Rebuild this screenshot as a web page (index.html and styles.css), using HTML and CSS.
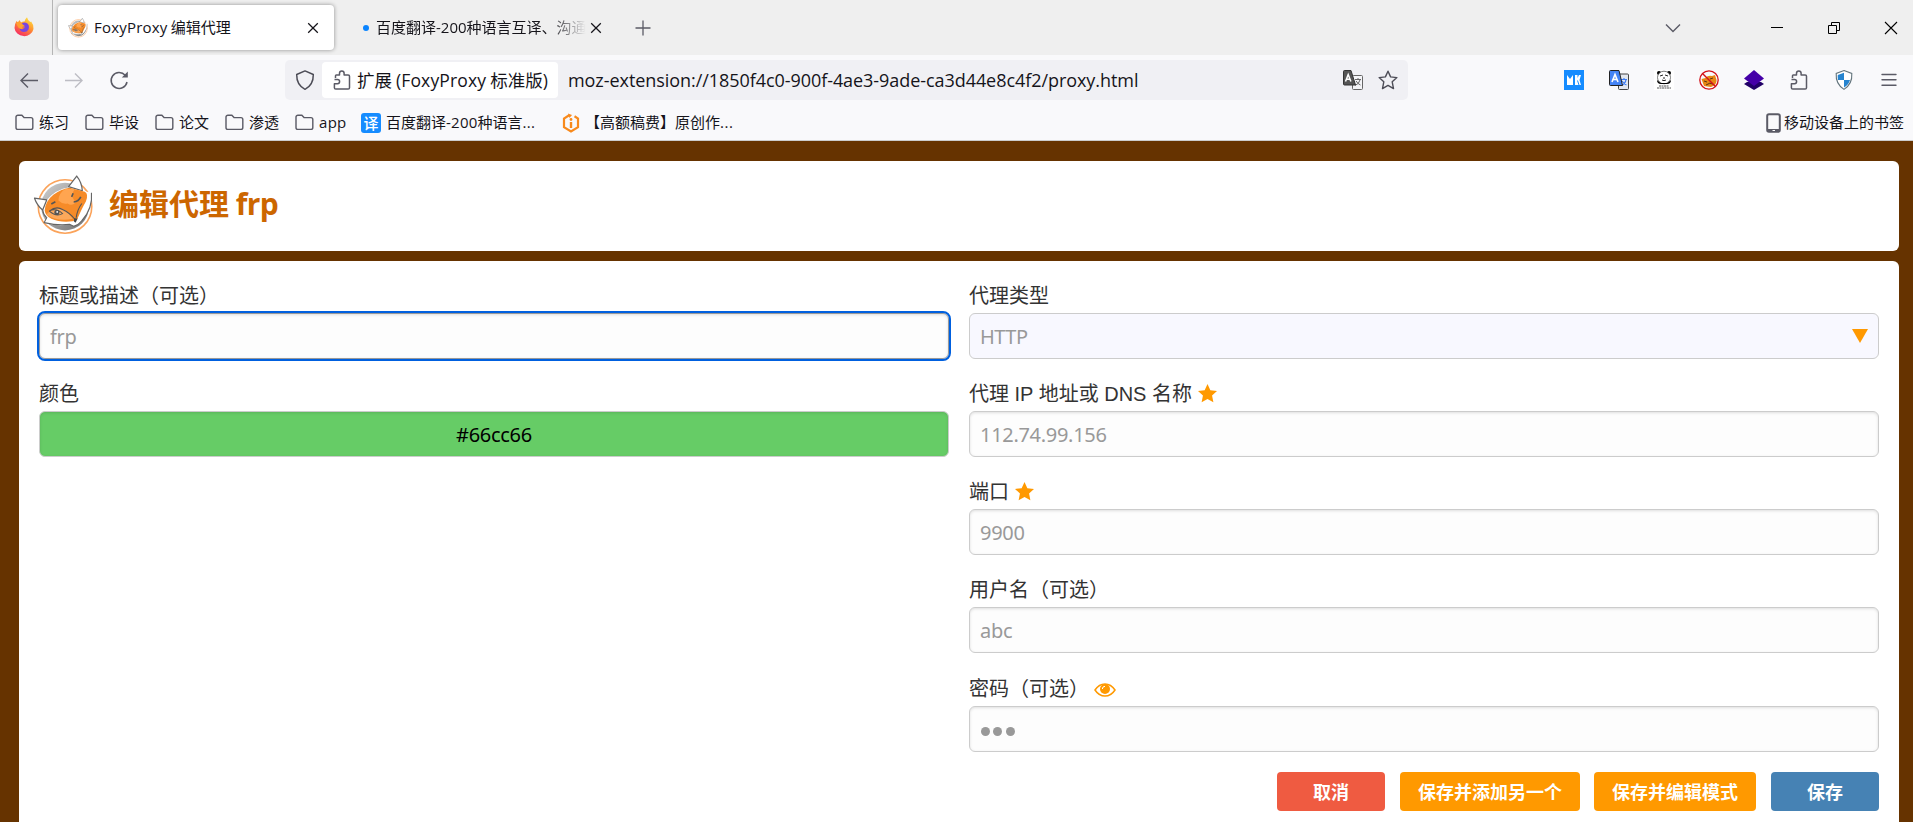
FILE: index.html
```html
<!DOCTYPE html>
<html lang="zh-CN">
<head>
<meta charset="utf-8">
<title>FoxyProxy 编辑代理</title>
<link rel="stylesheet" href="styles.css">
</head>
<body>
<svg width="0" height="0" class="defs">
  <defs>
    <linearGradient id="flame" x1="0.8" y1="0" x2="0.2" y2="1"><stop offset="0" stop-color="#ffe840"/><stop offset=".45" stop-color="#ff9030"/><stop offset="1" stop-color="#f5206a"/></linearGradient>
    <linearGradient id="disc" x1="0" y1="0" x2="1" y2="1"><stop offset="0" stop-color="#d0d0d0"/><stop offset="1" stop-color="#707070"/></linearGradient>
    <symbol id="fox" viewBox="0 0 60 60">
      <circle cx="31.500" cy="31" r="26.300" fill="#fff" stroke="#fba35a" stroke-width="1.600"/>
      <circle cx="31.500" cy="31" r="23.500" fill="url(#disc)"/>
      <path d="M13 25Q22 14 36 12L49 15.500 57.500 17.500Q60 31 48 45Q45 49 40 50.500L36 48.500Q25 51 11 47L13.500 42Q10 39 10 34Z" fill="#fff"/>
      <path d="M1.500 22.800L13.500 24.500 9.500 34.500Q4 30 1.500 22.800zM35 11.500L43 1Q48 7 48.500 15.500z" fill="#fff" stroke="#666" stroke-width="1.200" stroke-linejoin="round"/>
      <path d="M9.500 34.500Q10 39 13.500 42L11 46.800Q25 50 36 48.500L40 50.500Q45 49 48 45Q59 33 57.500 17.500" fill="none" stroke="#666" stroke-width="1.100"/>
      <path d="M11.500 35Q12 26 20 19.500Q27 14 36 12.500L51 16.500Q55 19 52 26Q48 33 43.500 43.500L39 45.500Q27 47 18 43Q12 40 11.500 35Z" fill="#f68b28"/>
      <path d="M25 25Q25 18 32 13.500L41 14Q36 20 42 27Q38 31 34 28Q29 29 25 25Z" fill="#ffa550"/>
      <path d="M13 39Q18 34 23 33Q31 31 39 43Q24 46 13 39Z" fill="#fda95b"/>
      <path d="M16 35.500Q23 30 29 34Q36 37 41.500 44M16 35.500Q23 32 29 38Q23 41.500 16 35.500M42.500 42Q43.500 34 48 28" fill="none" stroke="#555" stroke-width="1.100"/>
      <circle cx="23.500" cy="36.800" r="2.500" fill="#555"/><circle cx="23.800" cy="36.300" r=".9" fill="#fff"/>
      <path d="M40.500 42.500l3.500.3-2.200 4.200-1.700-1.500z" fill="#444"/>
      <path d="M40 26.500Q45 26 47 21.500M38 21.500l1.500-3.500M18 28.500l4-2.200" fill="none" stroke="#555" stroke-width="1.600"/>
    </symbol>
    <symbol id="folder" viewBox="0 0 20 18"><path d="M1 3.300a2 2 0 0 1 2-2h4.200l2.300 2.500h7.300a2 2 0 0 1 2 2v8.500a2 2 0 0 1-2 2H3a2 2 0 0 1-2-2z" fill="none" stroke="#5b5b66" stroke-width="1.500"/></symbol>
    <symbol id="puzzle" viewBox="0 0 20 20"><path d="M3.500 8V5.800Q3.500 5 4.300 5H7.500V3.300a2.300 2.300 0 0 1 4.600 0V5h4.100q1.300 0 1.300 1.300V17.700q0 1.300-1.300 1.300H3.700q-1.300 0-1.300-1.300V13.700H5.500a2 2 0 0 0 0-4.200H2.500" fill="none" stroke="#5b5b66" stroke-width="1.500" stroke-linejoin="round"/></symbol>
    <symbol id="close" viewBox="0 0 12 12"><path d="M1.200 1.200l9.600 9.600M10.800 1.200l-9.600 9.600" fill="none" stroke="#15141a" stroke-width="1.250"/></symbol>
    <symbol id="star" viewBox="0 0 20 20"><path d="M10 0l3 6.500 7 .8-5.200 4.800 1.400 7.100-6.200-3.500-6.200 3.500 1.400-7.100L0 7.300l7-.8z" fill="#f90"/></symbol>
  </defs>
</svg>

<header class="chrome">
  <div class="tabstrip">
    <div class="pinned">
      <svg class="i20" viewBox="0 0 20 20"><path d="M2.500 4l1.500 1.500L5.500 3l1.500 2.500Q9 4 10.500 4.500 11 2 13 .3q.5 2.500 3 4.500 1 .5 1-.5Q20 8 19.500 12A9.600 8.800 0 0 1 .5 11Q.5 7 2.500 4z" fill="url(#flame)"/><path d="M8 6.500Q10 5 12.500 6q3.500 1.500 2 6.500-1.500 2.500-4.500 2.500-4 0-4.500-4 1 1.500 3 1.300L11 10.500 7 9.500Q6.500 7.500 8 6.500z" fill="#7a45e0"/><path d="M2 6q3-2.500 5 .2L9.500 8 11 9.200 8 10l.5 2q-3 .5-4.500-2z" fill="#ffa130"/></svg>
    </div>
    <div class="tab active">
      <svg class="i20"><use href="#fox"/></svg>
      <span class="tabtext"><span class="lat foxy">FoxyProxy</span> 编辑代理</span>
      <svg class="x"><use href="#close"/></svg>
    </div>
    <div class="tab loading">
      <i class="dot"></i>
      <span class="tabtext fade">百度翻译<span class="lat">-200</span>种语言互译、沟通</span>
      <svg class="x"><use href="#close"/></svg>
    </div>
    <svg class="plus" viewBox="0 0 16 16"><path d="M8 .5v15M.5 8h15" stroke="#5b5b66" stroke-width="1.300"/></svg>
    <div class="window">
      <svg class="chev" viewBox="0 0 16 10"><path d="M1 1.500l7 7 7-7" fill="none" stroke="#5b5b66" stroke-width="1.400"/></svg>
      <svg class="wbtn" viewBox="0 0 14 14"><path d="M1 6.500h12" stroke="#000"/></svg>
      <svg class="wbtn" viewBox="0 0 14 14"><path d="M1.500 4.500h8v8h-8zM4.500 4.500v-3h8v8h-3" fill="none" stroke="#000"/></svg>
      <svg class="wbtn" viewBox="0 0 14 14"><path d="M1 1l12 12M13 1L1 13" stroke="#000" stroke-width="1.100"/></svg>
    </div>
  </div>

  <div class="navbar">
    <div class="navbtn on"><svg class="i20" viewBox="0 0 20 20"><path d="M19 10.500H2M9 3.500l-7 7 7 7" fill="none" stroke="#5b5b66" stroke-width="1.400"/></svg></div>
    <div class="navbtn off"><svg class="i20" viewBox="0 0 20 20"><path d="M1 10.500h17M11 3.500l7 7-7 7" fill="none" stroke="#bdbdc4" stroke-width="1.400"/></svg></div>
    <div class="navbtn reload"><svg class="i20" viewBox="0 0 20 20"><path d="M16.200 5.200A8 8 0 1 0 18 12" fill="none" stroke="#5b5b66" stroke-width="1.500"/><path d="M18.800 1.500v6h-6z" fill="#5b5b66"/></svg></div>
    <div class="urlbar">
      <svg class="i20 guard" viewBox="0 0 20 20"><path d="M10 .9L18.300 4.500Q18.500 15 10 19.300 1.500 15 1.700 4.500z" fill="none" stroke="#4c4c56" stroke-width="1.500" stroke-linejoin="round"/></svg>
      <div class="identity"><svg class="i20"><use href="#puzzle"/></svg><span>扩展 <span class="lat idl">(FoxyProxy</span> 标准版<span class="lat">)</span></span></div>
      <span class="url lat">moz-extension://1850f4c0-900f-4ae3-9ade-ca3d44e8c4f2/proxy.html</span>
      <svg class="i20 trans" viewBox="0 0 20 20"><rect x="9.500" y="5.500" width="10" height="14" rx="1" fill="#f5f5f8" stroke="#666"/><path d="M12 9.500h6M15 8v1.500M17 10q-1 4-5 5.500M13 11q2 3 4.500 4" fill="none" stroke="#666"/><path d="M.5 1.500q0-1 1-1H8l4.500 14.500H1.500q-1 0-1-1z" fill="#555" stroke="#333"/><path d="M2.500 11.500l2.700-7 2.700 7M3.500 9.200H7" fill="none" stroke="#fff" stroke-width="1.500"/></svg>
      <svg class="i20" viewBox="0 0 20 20"><path d="M10 1.200l2.600 5.700 6.300.7-4.700 4.200 1.300 6.800-5.500-3.200-5.500 3.200 1.300-6.800L1.100 7.600l6.300-.7z" fill="none" stroke="#4c4c56" stroke-width="1.400" stroke-linejoin="round"/></svg>
    </div>
    <div class="tools">
      <svg class="i20" viewBox="0 0 20 20"><rect width="20" height="20" fill="#168cff"/><path d="M3 5l3 4 3-4v10H3zM11 5h2.500v3L15 5h2l-1.500 5 1.500 5h-6z" fill="#fff"/><path d="M13.500 10.500l1.500 4.500" stroke="#168cff"/></svg>
      <svg class="i20" viewBox="0 0 20 20"><rect x="9.500" y="4" width="10" height="15.500" rx="1" fill="#e3e7ee" stroke="#444"/><path d="M12 9.500h6M15 8v1.500M17 10q-1 4-5 5.500M13 11q2 3 4.500 4" fill="none" stroke="#3d7cf4" stroke-width="1.200"/><path d="M.5 1.500q0-1 1-1H10l3.500 15H1.500q-1 0-1-1z" fill="#4484f6" stroke="#222"/><path d="M3 12l3-7.500L9 12M4 9.500h4" fill="none" stroke="#fff" stroke-width="1.600"/></svg>
      <svg class="i20" viewBox="0 0 20 20"><rect width="20" height="20" fill="#fff"/><circle cx="5" cy="3" r="2"/><circle cx="15" cy="3" r="2"/><ellipse cx="10" cy="7.500" rx="6.500" ry="6.300" fill="#fff" stroke="#444" stroke-width=".7"/><path d="M6 6l3-1M11 5l3 1M8 10q2 1.300 4 0M9 8h2" stroke="#222" fill="none"/><path d="M3 10q0 4 4 4h6q4 0 4-4l-3.500 3h-7z"/><path d="M5 16h10M3 18h14" stroke="#555" stroke-width="1" stroke-dasharray="2 .5"/></svg>
      <svg class="i20" viewBox="0 0 20 20"><path d="M2.500 9l4-1Q9 5 13 6l3-1 1.500 5Q18 15 12 17l-7-1z" fill="#e88613"/><path d="M5 11l3 1M11 9l3-1M7 15q4-3 7-1" stroke="#5a3512" fill="none"/><circle cx="10" cy="10" r="9.200" fill="none" stroke="#d3121a" stroke-width="1.300"/><path d="M3.500 3.500l13 13" stroke="#d3121a" stroke-width="1.400"/></svg>
      <svg class="i20" viewBox="0 0 20 20"><path d="M0 14l3-2h14l3 2-10 6z" fill="#210067"/><path d="M10 0l10 8.500-10 7.500L0 8.500z" fill="#4500a8"/></svg>
      <svg class="i20"><use href="#puzzle"/></svg>
      <svg class="i20" viewBox="0 0 20 20"><path d="M10 .5L17.800 3.500Q18.500 14 10 19.400 1.500 14 2.200 3.500z" fill="#fff" stroke="#63747c" stroke-width="1.100"/><path d="M10 2.800V10H4Q3.500 7 3.800 5zM10 10h6q-1.200 4.500-6 7.500z" fill="#2684cf"/></svg>
      <svg class="i20" viewBox="0 0 20 20"><path d="M3 4.500h14M3 9.800h14M3 15.200h14" stroke="#5b5b66" stroke-width="1.400" stroke-linecap="round"/></svg>
    </div>
  </div>

  <div class="bookmarks">
    <div class="bm"><svg class="fold"><use href="#folder"/></svg><span>练习</span></div>
    <div class="bm"><svg class="fold"><use href="#folder"/></svg><span>毕设</span></div>
    <div class="bm"><svg class="fold"><use href="#folder"/></svg><span>论文</span></div>
    <div class="bm"><svg class="fold"><use href="#folder"/></svg><span>渗透</span></div>
    <div class="bm app"><svg class="fold"><use href="#folder"/></svg><span class="lat">app</span></div>
    <div class="bm fanyi"><b class="yi">译</b><span>百度翻译<span class="lat">-200</span>种语言<span class="lat">...</span></span></div>
    <div class="bm gao"><svg class="i20" viewBox="0 0 20 20"><path d="M8.500 2L3 5.500v8.700l7 4.300 7-4.300V5.500l-3.500-2.200" fill="none" stroke="#f88a1c" stroke-width="2.200"/><path d="M7 .5l4 1.500L8.500 5" fill="#f88a1c"/><path d="M10 9v6" stroke="#f88a1c" stroke-width="2.400"/><circle cx="10" cy="6.500" r="1.400" fill="#f88a1c"/></svg><span>【高额稿费】原创作<span class="lat">...</span></span></div>
    <div class="bm mobile"><svg viewBox="0 0 15 20" width="15" height="20"><rect x="1.200" y="1.200" width="12.600" height="17.600" rx="1.800" fill="none" stroke="#5b5b66" stroke-width="2"/><path d="M1 17.500h13" stroke="#5b5b66" stroke-width="3"/><path d="M6.500 17.500h2.500" stroke="#fff" stroke-width="1"/></svg><span>移动设备上的书签</span></div>
  </div>
</header>

<main class="page">
  <section class="card title">
    <svg class="logo"><use href="#fox"/></svg>
    <h1>编辑代理 <span class="lat">frp</span></h1>
  </section>
  <section class="card form">
    <div class="cols">
      <div class="col">
        <div class="field"><label>标题或描述（可选）</label><div class="input focus">frp</div></div>
        <div class="field"><label>颜色</label><div class="input color">#66cc66</div></div>
      </div>
      <div class="col">
        <div class="field"><label>代理类型</label><div class="input select">HTTP<i class="arrow"></i></div></div>
        <div class="field"><label>代理 IP 地址或 DNS 名称<svg class="star"><use href="#star"/></svg></label><div class="input">112.74.99.156</div></div>
        <div class="field"><label>端口<svg class="star"><use href="#star"/></svg></label><div class="input">9900</div></div>
        <div class="field user"><label>用户名（可选）</label><div class="input">abc</div></div>
        <div class="field"><label>密码（可选）<svg class="eye" viewBox="0 0 22 14"><path d="M1 7Q5 .9 11 .9T21 7Q17 13.100 11 13.100T1 7z" fill="none" stroke="#f90" stroke-width="1.500"/><circle cx="11" cy="6" r="5" fill="#f90"/><path d="M8.300 6A2.800 2.800 0 0 1 11 3.300" fill="none" stroke="#fff" stroke-width="1"/></svg></label><div class="input pw"><i></i><i></i><i></i></div></div>
      </div>
    </div>
    <div class="actions">
      <div class="btn cancel">取消</div>
      <div class="btn another">保存并添加另一个</div>
      <div class="btn patterns">保存并编辑模式</div>
      <div class="btn save">保存</div>
    </div>
  </section>
</main>
</body>
</html>
```
FILE: styles.css
```css
* { box-sizing: border-box; }
body { margin: 0; height: 822px; overflow: hidden; background: #630; font-family: "Noto Sans CJK SC", sans-serif; color: #15141a; }
svg { display: block; flex: none; overflow: visible; }
.defs { position: absolute; }
i { display: block; flex: none; }
.lat { font-family: "Open Sans", "Noto Sans CJK SC", sans-serif; }
.i20 { width: 20px; height: 20px; }

.chrome { height: 141px; background: #f9f9fb; border-bottom: 1px solid #ccc; font-size: 15px; line-height: 20px; white-space: nowrap; }
.tabstrip { height: 55px; background: #efefef; display: flex; align-items: center; }
.pinned { width: 53px; height: 55px; padding: 17px 0 0 14px; border-right: 1px solid #b5b5b5; }
.tab { height: 45px; display: flex; align-items: center; }
.tab.active { width: 276px; margin-left: 5px; padding: 0 15px 0 10px; background: #fff; border-radius: 4px; box-shadow: 0 0 4px rgba(0, 0, 0, .4); }
.tabtext { padding-bottom: 2px; }
.tab.active .tabtext { margin-left: 6px; flex: 1; }
.foxy { letter-spacing: 0.2px; }
.x { width: 12px; height: 12px; }
.tab.loading { margin-left: 29px; width: 239px; }
.dot { width: 6px; height: 6px; border-radius: 50%; background: #0a84ff; }
.fade { width: 210px; margin-left: 7px; margin-right: 4px; overflow: hidden; -webkit-mask-image: linear-gradient(to right, #000 82%, transparent); mask-image: linear-gradient(to right, #000 82%, transparent); }
.plus { width: 16px; height: 16px; margin-left: 33px; }
.window { margin-left: auto; display: flex; align-items: center; padding-right: 15px; }
.chev { width: 16px; height: 10px; margin-right: 89px; }
.wbtn { width: 14px; height: 14px; margin-left: 43px; }
.chev + .wbtn { margin-left: 0; }

.navbar { height: 50px; display: flex; align-items: center; padding-left: 9px; }
.navbtn { width: 40px; height: 40px; padding: 10px; margin-right: 5px; border-radius: 4px; }
.navbtn.on { background: #dddde3; }
.urlbar { width: 1123px; height: 40px; margin-left: 141px; padding: 0 10px; border-radius: 5px; background: #f0f0f4; display: flex; align-items: center; font-size: 17.5px; }
.identity { width: 236px; height: 36px; margin-left: 7px; padding-left: 10px; background: #fff; border-radius: 4px; display: flex; align-items: center; gap: 5px; }
.idl { letter-spacing: 0.15px; }
.url { margin-left: 10px; flex: 1; letter-spacing: -0.06px; font-size: 18px; }
.trans { margin-right: 15px; }
.tools { margin-left: 156px; display: flex; gap: 25px; }

.bookmarks { height: 35px; display: flex; align-items: center; padding: 0 9px 0 15px; }
.bm { width: 70px; display: flex; align-items: center; }
.bm > span { padding-bottom: 2px; }
.fold { width: 19px; height: 17px; margin-right: 5px; }
.bm.app { width: 66px; }
.app .lat { letter-spacing: 0.3px; }
.yi { width: 20px; height: 20px; margin-right: 5px; border-radius: 3px; background: #168cff; color: #fff; font-size: 15px; font-weight: 500; text-align: center; }
.fanyi { width: 200px; }
.fanyi .lat { letter-spacing: 0.25px; }
.gao { width: 200px; }
.gao > span { margin-left: 4px; }
.gao .lat { letter-spacing: 0.5px; }
.mobile { width: auto; margin-left: auto; gap: 3px; }

.page { padding: 20px 14px 0 19px; }
.card { background: #fff; border-radius: 6px; }
.title { height: 90px; padding: 14px; display: flex; }
.logo { width: 61px; height: 61px; }
h1 { margin: 5px 0 0 15px; font-size: 30px; line-height: 44px; font-weight: 700; color: #c60; }
h1 .lat { letter-spacing: -0.7px; }
.form { margin-top: 10px; height: 580px; padding: 20px; color: #333; }
.cols { display: flex; gap: 20px; }
.col { flex: 1; }
.field { height: 98px; }
.field.user { height: 99px; }
label { height: 32px; padding-bottom: 3px; display: flex; align-items: center; font-family: "Liberation Sans", "Noto Sans CJK SC", sans-serif; font-size: 20px; line-height: 28px; }
.input { height: 46px; padding: 0 10px; display: flex; align-items: center; border: 1px solid #ccc; border-radius: 6px; background: #fdfdfd; box-shadow: inset 0 1px 3px rgba(0, 0, 0, .12); font-family: "Noto Sans", sans-serif; font-size: 20px; letter-spacing: -0.3px; color: #999; }
.input.focus { border-color: #999; outline: 2px solid #0060df; outline-offset: 0; padding-left: 10px; }
.input.color { background: #6c6; color: #000; justify-content: center; }
.input.select { background: #f8f8ff; box-shadow: none; justify-content: space-between; letter-spacing: -0.5px; }
.arrow { border: 8px solid transparent; border-top: 14px solid #f90; border-bottom: 0; }
.star { width: 19px; height: 19px; margin: -1px 0 0 6px; }
.eye { width: 22px; height: 14px; margin: 2px 0 0 5px; }
.pw { gap: 3.3px; padding: 5px 11px 0; }
.pw i { width: 9px; height: 9px; border-radius: 50%; background: #999; }
.actions { display: flex; justify-content: flex-end; }
.btn { height: 39px; margin-left: 15px; border-radius: 4px; background: #f90; color: #fff; font-size: 18px; line-height: 39px; font-weight: 700; text-align: center; }
.cancel { width: 108px; background: #ef5b41; }
.another { width: 180px; }
.patterns { width: 162px; margin-left: 14px; }
.save { width: 108px; background: #4682b4; }
```
